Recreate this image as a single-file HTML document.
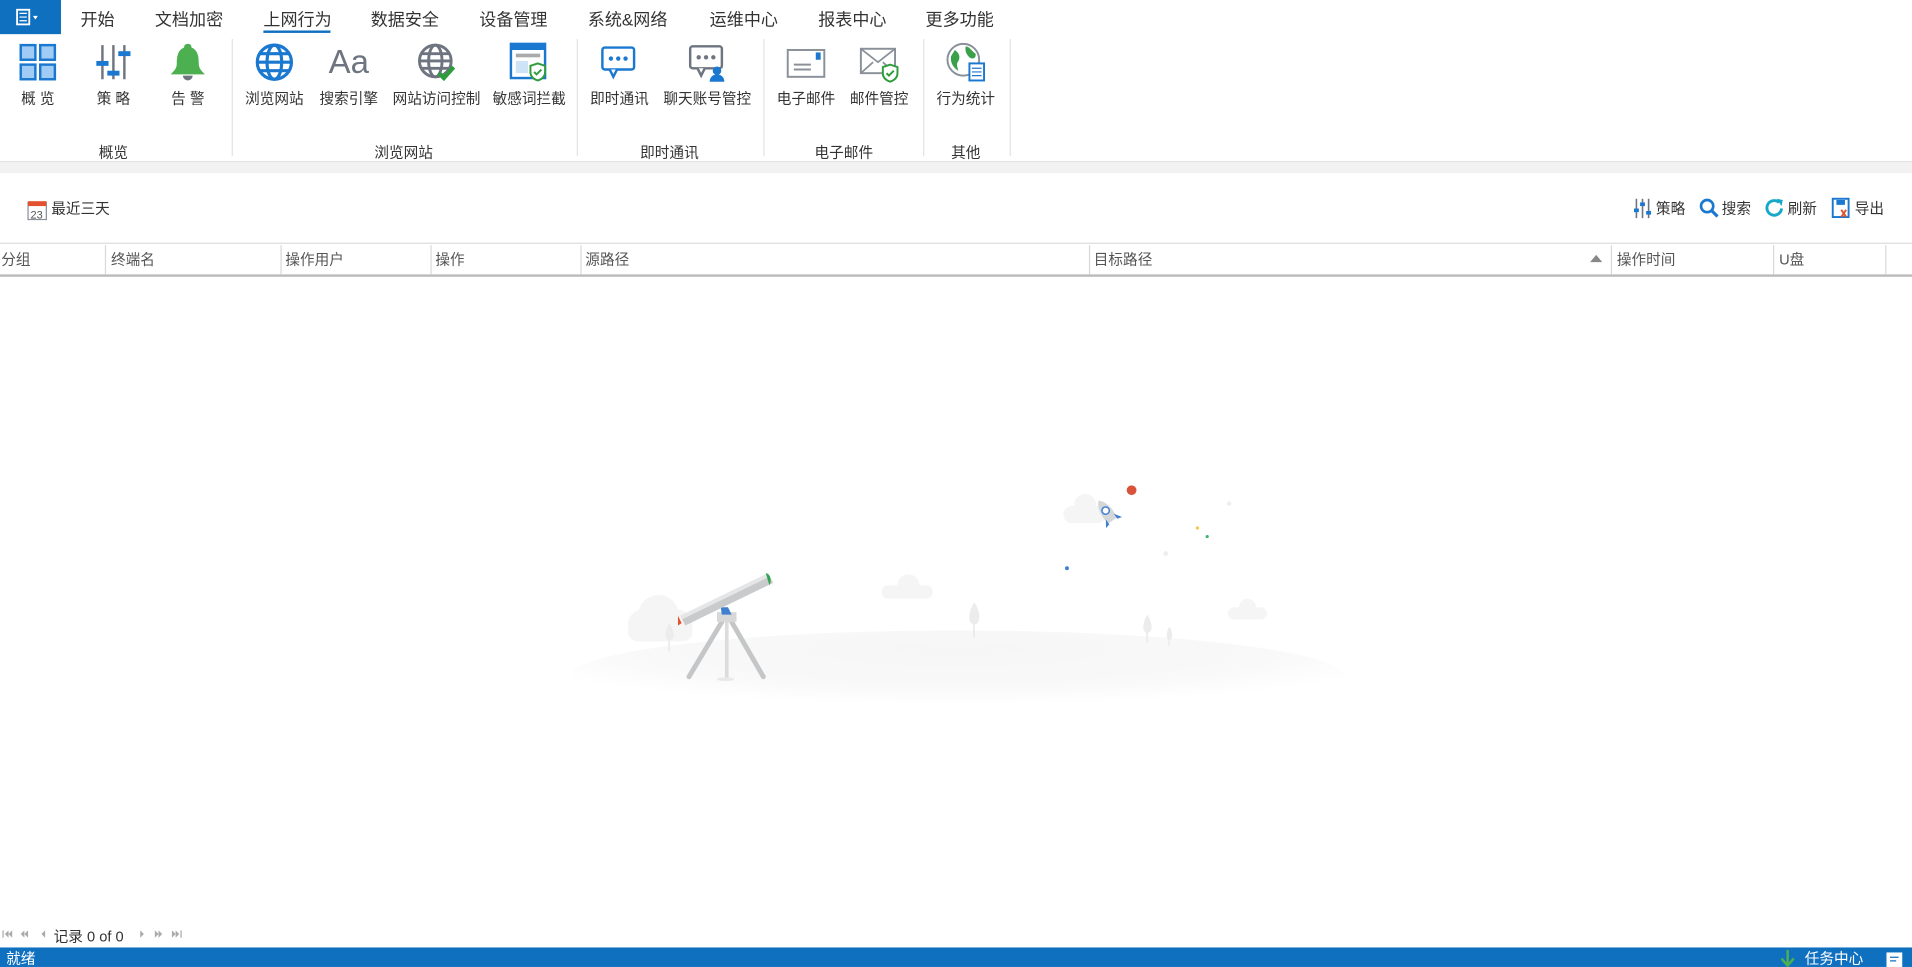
<!DOCTYPE html>
<html><head><meta charset="utf-8"><style>
html,body{margin:0;padding:0;width:1912px;height:967px;overflow:hidden;background:#fff}
#w{position:absolute;left:0;top:0;width:1568px;height:793px;transform:scale(1.21939);transform-origin:0 0;font-family:"Liberation Sans","Noto Sans CJK SC",sans-serif;color:#333}
.a{position:absolute;white-space:nowrap}
.tab{position:absolute;top:6px;font-size:14px;color:#333}
.lbl{position:absolute;top:72px;font-size:12px;color:#333;transform:translateX(-50%)}
.grp{position:absolute;top:116px;font-size:12px;color:#333;transform:translateX(-50%)}
.ic{position:absolute;top:34px;width:34px;height:34px;transform:translateX(-50%)}
.sep{position:absolute;top:32px;height:96px;width:1px;background:#e3e3e3}
.h{position:absolute;top:200px;height:26px;line-height:26px;font-size:12px;color:#555}
.cs{position:absolute;top:201px;height:24px;width:1px;background:#d8d8d8}
.tb{position:absolute;top:162px;font-size:12px;color:#333}
</style></head><body><div id="w">
<div class="a" style="left:0;top:0;width:50px;height:28px;background:#1070c0"></div>
<svg class="a" style="left:13px;top:7px" width="22" height="14"><rect x="1" y="1" width="10" height="12" fill="none" stroke="#fff" stroke-width="1.5"/><path d="M3 4h6M3 7h6M3 10h6" stroke="#fff"/><path d="M14 6l2 3 2-3z" fill="#fff"/></svg>
<div class="tab" style="left:66px">开始</div>
<div class="tab" style="left:127px">文档加密</div>
<div class="tab" style="left:216px">上网行为</div>
<div class="a" style="left:216px;top:25px;width:55px;height:2px;background:#1070c0"></div>
<div class="tab" style="left:304px">数据安全</div>
<div class="tab" style="left:393px">设备管理</div>
<div class="tab" style="left:482px">系统&amp;网络</div>
<div class="tab" style="left:582px">运维中心</div>
<div class="tab" style="left:671px">报表中心</div>
<div class="tab" style="left:759px">更多功能</div>
<svg class="ic" style="left:31px" viewBox="0 0 34 34"><g fill="#9fcbf5" stroke="#1a78d0" stroke-width="2"><rect x="3" y="3" width="12" height="12"/><rect x="19" y="3" width="12" height="12"/><rect x="3" y="19" width="12" height="12"/><rect x="19" y="19" width="12" height="12"/></g></svg>
<svg class="ic" style="left:93px" viewBox="0 0 34 34"><g stroke="#6e7580" stroke-width="2"><path d="M8 3v28M17 3v28M26 3v28"/></g><g fill="#1a78d0"><rect x="3" y="16" width="10" height="4"/><rect x="12" y="24" width="10" height="4"/><rect x="21" y="8" width="10" height="4"/></g></svg>
<svg class="ic" style="left:154px" viewBox="0 0 34 34"><path d="M17 2c-2 0-3 1-3 3-5 2-6 7-6 13 0 4-2 6-5 9h28c-3-3-5-5-5-9 0-6-1-11-6-13 0-2-1-3-3-3z" fill="#4caf50"/><path d="M13 28a4 4 0 0 0 8 0z" fill="#6e7580"/></svg>
<svg class="ic" style="left:225px" viewBox="0 0 34 34"><g fill="none" stroke="#1a78d0" stroke-width="2.6"><circle cx="17" cy="17" r="14"/><ellipse cx="17" cy="17" rx="6" ry="14"/><path d="M3 17h28M5 10h24M5 24h24"/></g></svg>
<div class="ic" style="left:286px;font-size:27px;color:#6e7580;text-align:center;line-height:34px">Aa</div>
<svg class="ic" style="left:358px" viewBox="0 0 34 34"><g fill="none" stroke="#6e7580" stroke-width="2.4"><circle cx="16" cy="16" r="13"/><ellipse cx="16" cy="16" rx="5.5" ry="13"/><path d="M3 16h26M5 10h22M5 22h22"/></g><path d="M19 26l4 4 8-9" fill="none" stroke="#2e9c3d" stroke-width="3.5"/></svg>
<svg class="ic" style="left:434px" viewBox="0 0 34 34"><rect x="2" y="2" width="28" height="28" fill="#fff" stroke="#1a78d0" stroke-width="2"/><rect x="2" y="2" width="28" height="5" fill="#1a78d0"/><rect x="6" y="10" width="20" height="3" fill="#aaa"/><rect x="6" y="16" width="10" height="10" fill="#cfe3f7"/><path d="M24 18l6 2v5c0 4-3 6-6 7-3-1-6-3-6-7v-5z" fill="#fff" stroke="#2e9c3d" stroke-width="1.6"/><path d="M21 25l2 2 4-4" fill="none" stroke="#2e9c3d" stroke-width="1.6"/></svg>
<svg class="ic" style="left:508px" viewBox="0 0 34 34"><rect x="3" y="5" width="26" height="18" rx="2" fill="#fff" stroke="#1a78d0" stroke-width="2"/><path d="M9 23l3 6 3-6" fill="#fff" stroke="#1a78d0" stroke-width="2"/><g fill="#1a78d0"><circle cx="10" cy="14" r="1.8"/><circle cx="16" cy="14" r="1.8"/><circle cx="22" cy="14" r="1.8"/></g></svg>
<svg class="ic" style="left:580px" viewBox="0 0 34 34"><rect x="3" y="4" width="26" height="18" rx="2" fill="#fff" stroke="#6e7580" stroke-width="2"/><path d="M9 22l3 6 3-6" fill="#fff" stroke="#6e7580" stroke-width="2"/><g fill="#6e7580"><circle cx="10" cy="13" r="1.8"/><circle cx="16" cy="13" r="1.8"/><circle cx="22" cy="13" r="1.8"/></g><circle cx="25" cy="24" r="3.5" fill="#1a78d0"/><path d="M19 33c0-4 3-6 6-6s6 2 6 6z" fill="#1a78d0"/></svg>
<svg class="ic" style="left:661px" viewBox="0 0 34 34"><rect x="2" y="7" width="30" height="22" fill="#fff" stroke="#8a9099" stroke-width="1.6"/><rect x="25" y="9" width="4" height="6" fill="#1a78d0"/><path d="M7 19h14M7 23h14" stroke="#8a9099" stroke-width="1.6"/></svg>
<svg class="ic" style="left:721px" viewBox="0 0 34 34"><rect x="2" y="6" width="28" height="20" fill="#fff" stroke="#8a9099" stroke-width="1.6"/><path d="M2 6l14 11 14-11M2 26l10-9M30 26l-10-9" fill="none" stroke="#8a9099" stroke-width="1.4"/><path d="M26 19l6 2v5c0 4-3 6-6 7-3-1-6-3-6-7v-5z" fill="#fff" stroke="#2e9c3d" stroke-width="1.6"/><path d="M23 26l2 2 4-4" fill="none" stroke="#2e9c3d" stroke-width="1.6"/></svg>
<svg class="ic" style="left:792px" viewBox="0 0 34 34"><circle cx="15" cy="15" r="13" fill="#fff" stroke="#8a9099" stroke-width="1.6"/><path d="M8 7c3 2 5 5 3 9-2 2-1 5 0 8-4-2-7-7-6-12zM17 4c3 0 5 4 8 6 1 4-3 5-5 3-2-2-4-5-3-9z" fill="#3aa04a"/><rect x="20" y="18" width="12" height="14" fill="#fff" stroke="#1a78d0" stroke-width="1.6"/><path d="M22 22h8M22 25h8M22 28h8" stroke="#1a78d0"/></svg>
<div class="lbl" style="left:31px">概 览</div>
<div class="lbl" style="left:93px">策 略</div>
<div class="lbl" style="left:154px">告 警</div>
<div class="lbl" style="left:225px">浏览网站</div>
<div class="lbl" style="left:286px">搜索引擎</div>
<div class="lbl" style="left:358px">网站访问控制</div>
<div class="lbl" style="left:434px">敏感词拦截</div>
<div class="lbl" style="left:508px">即时通讯</div>
<div class="lbl" style="left:580px">聊天账号管控</div>
<div class="lbl" style="left:661px">电子邮件</div>
<div class="lbl" style="left:721px">邮件管控</div>
<div class="lbl" style="left:792px">行为统计</div>
<div class="grp" style="left:93px">概览</div>
<div class="grp" style="left:331px">浏览网站</div>
<div class="grp" style="left:549px">即时通讯</div>
<div class="grp" style="left:692px">电子邮件</div>
<div class="grp" style="left:792px">其他</div>
<div class="sep" style="left:190px"></div><div class="sep" style="left:473px"></div><div class="sep" style="left:626px"></div><div class="sep" style="left:757px"></div><div class="sep" style="left:828px"></div>
<div class="a" style="left:0;top:132px;width:1568px;height:9px;background:#f2f2f2;border-top:1px solid #e2e2e2"></div>
<svg class="a" style="left:22px;top:163px" width="17" height="18"><rect x="1" y="3" width="15" height="14" fill="#fff" stroke="#8a9099"/><rect x="1" y="2" width="15" height="4" fill="#e2522e"/><text x="3" y="16" font-size="9" fill="#555" font-family="Liberation Sans">23</text></svg>
<div class="tb" style="left:42px">最近三天</div>
<svg class="a" style="left:1339px;top:162px" width="17" height="17"><path d="M3 1v16M8 1v16M13 1v16" stroke="#6e7580" stroke-width="1.3"/><rect x="1" y="9" width="4" height="3" fill="#1a78d0"/><rect x="6" y="4" width="4" height="3" fill="#1a78d0"/><rect x="11" y="11" width="4" height="3" fill="#1a78d0"/></svg>
<div class="tb" style="left:1358px">策略</div>
<svg class="a" style="left:1393px;top:162px" width="17" height="17"><circle cx="7" cy="7" r="5" fill="none" stroke="#1a78d0" stroke-width="2.2"/><path d="M10.5 10.5l5 5" stroke="#1a78d0" stroke-width="2.6"/></svg>
<div class="tb" style="left:1412px">搜索</div>
<svg class="a" style="left:1447px;top:162px" width="17" height="17"><path d="M14 9a6 6 0 1 1-2-5" fill="none" stroke="#16a8c8" stroke-width="2.4"/><path d="M10 1l5 1-1 5z" fill="#16a8c8"/></svg>
<div class="tb" style="left:1466px">刷新</div>
<svg class="a" style="left:1502px;top:162px" width="17" height="17"><rect x="1" y="1" width="13" height="15" fill="#fff" stroke="#1a78d0" stroke-width="1.6"/><rect x="4" y="2" width="7" height="4" fill="#1a78d0"/><path d="M8 10l4 6M12 10l-4 6" stroke="#e2522e" stroke-width="1.6"/></svg>
<div class="tb" style="left:1521px">导出</div>
<div class="a" style="left:0;top:199px;width:1568px;height:1px;background:#ddd"></div>
<div class="a" style="left:0;top:225px;width:1568px;height:2px;background:#bbb"></div>
<div class="h" style="left:1px">分组</div>
<div class="h" style="left:91px">终端名</div>
<div class="h" style="left:234px">操作用户</div>
<div class="h" style="left:357px">操作</div>
<div class="h" style="left:480px">源路径</div>
<div class="h" style="left:897px">目标路径</div>
<div class="a" style="left:1304px;top:209px;width:0;height:0;border-left:5px solid transparent;border-right:5px solid transparent;border-bottom:6px solid #888"></div>
<div class="h" style="left:1326px">操作时间</div>
<div class="h" style="left:1459px">U盘</div>
<div class="cs" style="left:86px"></div><div class="cs" style="left:230px"></div><div class="cs" style="left:353px"></div><div class="cs" style="left:476px"></div><div class="cs" style="left:893px"></div><div class="cs" style="left:1321px"></div><div class="cs" style="left:1454px"></div><div class="cs" style="left:1546px"></div>
<svg class="a" style="left:0;top:0" width="1568" height="793">
<defs><radialGradient id="g" cx="0.5" cy="0.2" r="0.6"><stop offset="0" stop-color="#f6f6f6"/><stop offset="0.7" stop-color="#f9f9f9"/><stop offset="1" stop-color="#fff"/></radialGradient></defs>
<ellipse cx="785" cy="555" rx="318" ry="38" fill="url(#g)"/>
<g fill="#f5f5f5"><circle cx="540" cy="505" r="17"/><circle cx="527" cy="512" r="12"/><circle cx="556" cy="512" r="12"/><rect x="515" y="510" width="53" height="16" rx="8"/>
<circle cx="745" cy="480" r="9"/><rect x="723" y="480" width="42" height="11" rx="5"/>
<circle cx="890" cy="414" r="9"/><rect x="872" y="415" width="35" height="14" rx="7"/>
<circle cx="1023" cy="498" r="7"/><rect x="1007" y="498" width="32" height="10" rx="5"/></g>
<g fill="#ececec"><path d="M549 511c-4 6-5 14 0 14s4-8 0-14z"/><rect x="548" y="522" width="1.5" height="12"/>
<path d="M799 494c-5 7-6 18 0 18s5-11 0-18z"/><rect x="798" y="510" width="1.5" height="13"/>
<path d="M941 504c-4 6-5 15 0 15s4-9 0-15z"/><rect x="940" y="516" width="1.5" height="11"/>
<path d="M959 514c-3 4-3 11 0 11s3-7 0-11z"/><rect x="958" y="522" width="1.2" height="8"/></g>
<g stroke="#c4c6c8" stroke-width="4" stroke-linecap="round"><path d="M592 510l-27 45M600 510l26 45"/></g>
<path d="M596 508v49" stroke="#dcdcdc" stroke-width="3"/>
<rect x="588" y="502" width="16" height="8" fill="#d8d8d8"/>
<path d="M591 498l6 0 3 6-8 0z" fill="#3f7fd0"/>
<path d="M558 505l72-35 4 8-72 35z" fill="#c8cacc"/><path d="M558 505l72-35 1 3-72 35z" fill="#e6e6e6"/>
<path d="M556 505l3 6-3 2z" fill="#e2522e"/><path d="M628 470c4 1 5 6 3 10z" fill="#2ea44f"/>
<ellipse cx="595" cy="557" rx="7" ry="1.5" fill="#e8e8e8"/>
<g transform="translate(909 422) rotate(-35)"><path d="M0-14c5 4 6 14 4 20h-8c-2-6-1-16 4-20z" fill="#d4d6d8"/><circle cx="0" cy="-4" r="3" fill="#fff" stroke="#3f7fd0" stroke-width="1.2"/><path d="M-4 2l-4 6 4-1zM4 2l4 6-4-1z" fill="#3f7fd0"/></g>
<circle cx="928" cy="402" r="4" fill="#d9533b"/>
<circle cx="875" cy="466" r="1.6" fill="#3f7fd0"/><circle cx="956" cy="454" r="2" fill="#eee"/><circle cx="1008" cy="413" r="1.8" fill="#eee"/><circle cx="982" cy="433" r="1.3" fill="#f2c94c"/><circle cx="990" cy="440" r="1.3" fill="#3cb371"/>
<g fill="#aaa"><rect x="2" y="763" width="1" height="6"/><path d="M7 763l-3 3 3 3zM10 763l-3 3 3 3z"/><path d="M20 763l-3 3 3 3zM23 763l-3 3 3 3z"/><path d="M37 763l-3 3 3 3z"/>
<path d="M115 763l3 3-3 3z"/><path d="M127 763l3 3-3 3zM130 763l3 3-3 3z"/><path d="M141 763l3 3-3 3zM144 763l3 3-3 3z"/><rect x="148" y="763" width="1" height="6"/></g>
</svg>
<div class="a" style="left:44px;top:759px;font-size:12px;color:#333">记录 0 of 0</div>
<div class="a" style="left:0;top:777px;width:1568px;height:16px;background:#1070c0"></div>
<div class="a" style="left:5px;top:779px;font-size:12px;color:#fff;line-height:14px">就绪</div>
<svg class="a" style="left:1459px;top:779px" width="14" height="14"><path d="M7 0v12M2 7l5 6 5-6" stroke="#4caf50" stroke-width="2" fill="none"/></svg>
<div class="a" style="left:1480px;top:779px;font-size:12px;color:#fff;line-height:14px">任务中心</div>
<svg class="a" style="left:1547px;top:781px" width="14" height="12"><rect x="0" y="0" width="13" height="12" fill="#fff"/><path d="M3 4h7M3 7h5" stroke="#1070c0"/></svg>
</div></body></html>
